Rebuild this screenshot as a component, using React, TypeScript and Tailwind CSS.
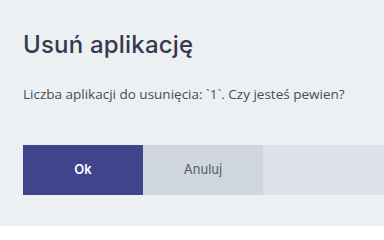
import React from 'react';

export default function App() {
  return (
    <div className="w-[384px] h-[226px] overflow-hidden bg-[#edf0f3] pl-[23px] pt-[30px]">
      <h1 className="font-['Inter',sans-serif] text-[24px] leading-[30px] font-medium text-[#353a50] tracking-[0.2px]">
        Usuń aplikację
      </h1>
      <p className="mt-[25px] font-['Open_Sans',sans-serif] text-[13.5px] leading-[18px] text-[#484c55]">
        Liczba aplikacji do usunięcia: `1`. Czy jesteś pewien?
      </p>
      <div className="mt-[42px] flex h-[50px]">
        <button className="w-[120px] bg-[#3f458b] font-['Inter',sans-serif] text-[13px] font-semibold text-white">
          Ok
        </button>
        <button className="w-[120px] bg-[#cfd6e0] font-['Inter',sans-serif] text-[13px] text-[#565c6b]">
          Anuluj
        </button>
        <div className="flex-1 bg-[#dde2ea]" />
      </div>
    </div>
  );
}
